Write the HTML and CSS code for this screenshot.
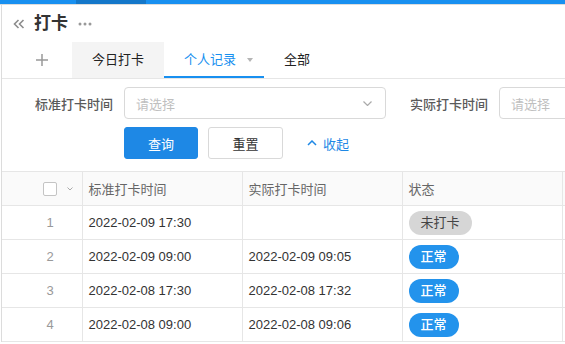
FILE: index.html
```html
<!DOCTYPE html>
<html lang="zh-CN">
<head>
    <meta charset="UTF-8">
    <meta name="viewport" content="width=device-width, initial-scale=1.0">
    <title>打卡</title>
    <link rel="stylesheet" href="styles.css">
</head>
<body>
    <div class="topbar"><span class="topbar-active"></span></div>
    <div class="panel">
        <div class="title-row">
            <svg class="back" width="12" height="10" viewBox="0 0 12 10"><path d="M5.5 1 L1.5 5 L5.5 9 M10.5 1 L6.5 5 L10.5 9" fill="none" stroke="#8c8c8c" stroke-width="1.6"/></svg>
            <span class="title">打卡</span>
            <svg class="more" width="14" height="4" viewBox="0 0 14 4"><circle cx="2" cy="2" r="1.5" fill="#999"/><circle cx="7" cy="2" r="1.5" fill="#999"/><circle cx="12" cy="2" r="1.5" fill="#999"/></svg>
        </div>

        <div class="tabs">
            <div class="tab-add">
                <svg width="12" height="12" viewBox="0 0 12 12"><path d="M6 0 V12 M0 6 H12" stroke="#999" stroke-width="1.5"/></svg>
            </div>
            <div class="tab tab-gray">今日打卡</div>
            <div class="tab tab-active">个人记录<span class="caret"></span></div>
            <div class="tab">全部</div>
        </div>

        <div class="filter">
            <div class="filter-row">
                <label class="filter-label">标准打卡时间</label>
                <div class="select">
                    <span class="placeholder">请选择</span>
                    <svg width="9" height="5" viewBox="0 0 9 5"><path d="M0.5 0.5 L4.5 4.5 L8.5 0.5" fill="none" stroke="#aaa" stroke-width="1.2"/></svg>
                </div>
                <label class="filter-label">实际打卡时间</label>
                <div class="select">
                    <span class="placeholder">请选择</span>
                </div>
            </div>
            <div class="button-row">
                <button class="btn btn-primary">查询</button>
                <button class="btn">重置</button>
                <a class="collapse" href="#">
                    <svg width="10" height="6" viewBox="0 0 10 6"><path d="M1 5 L5 1 L9 5" fill="none" stroke="#1e88e5" stroke-width="1.5"/></svg>
                    收起
                </a>
            </div>
        </div>

        <table class="records">
            <colgroup>
                <col style="width: 80px">
                <col style="width: 160px">
                <col style="width: 160px">
                <col style="width: 160px">
                <col style="width: 100px">
            </colgroup>
            <thead>
                <tr>
                    <th class="cell-index">
                        <span class="checkbox"></span>
                        <svg class="check-caret" width="6" height="4" viewBox="0 0 6 4"><path d="M0.5 0.5 L3 3 L5.5 0.5" fill="none" stroke="#aaa" stroke-width="1"/></svg>
                    </th>
                    <th>标准打卡时间</th>
                    <th>实际打卡时间</th>
                    <th>状态</th>
                    <th></th>
                </tr>
            </thead>
            <tbody id="record-body"></tbody>
        </table>
    </div>

    <script>
        const records = [
            { plan: "2022-02-09 17:30", actual: "", status: "未打卡" },
            { plan: "2022-02-09 09:00", actual: "2022-02-09 09:05", status: "正常" },
            { plan: "2022-02-08 17:30", actual: "2022-02-08 17:32", status: "正常" },
            { plan: "2022-02-08 09:00", actual: "2022-02-08 09:06", status: "正常" }
        ];

        const body = document.getElementById('record-body');
        records.forEach((rec, index) => {
            const badgeClass = rec.status === '正常' ? 'badge badge-ok' : 'badge badge-missing';
            body.innerHTML += `
                <tr>
                    <td class="cell-index"><span class="row-num">${index + 1}</span></td>
                    <td>${rec.plan}</td>
                    <td>${rec.actual}</td>
                    <td><span class="${badgeClass}">${rec.status}</span></td>
                    <td></td>
                </tr>
            `;
        });
    </script>
</body>
</html>
```

FILE: styles.css
```css
body {
    margin: 0;
    padding: 0;
    font-family: "Liberation Sans", "Noto Sans CJK SC", sans-serif;
    font-size: 13px;
    color: #333;
    overflow: hidden;
    background: #fff;
}
.topbar {
    height: 4px;
    background-color: #1890f0;
    border-bottom: 1px solid #dcdcdc;
}
.topbar-active {
    display: block;
    margin-left: 76px;
    width: 70px;
    height: 4px;
    background-color: #1477c9;
}
.panel {
    margin-left: 1px;
    border-left: 1px solid #dcdcdc;
    width: 800px;
}
.title-row {
    display: flex;
    align-items: center;
    height: 37px;
    padding-left: 11px;
}
.title {
    margin-left: 9px;
    font-size: 17px;
    font-weight: bold;
    color: #333;
    line-height: 20px;
}
.more {
    margin-left: 10px;
}
.tabs {
    display: flex;
    height: 36px;
    border-bottom: 1px solid #e6e6e6;
}
.tab-add {
    display: flex;
    align-items: center;
    justify-content: center;
    width: 36px;
    margin-left: 22px;
    margin-right: 12px;
}
.tab {
    display: flex;
    align-items: center;
    padding: 0 20px;
    color: #222;
    line-height: 16px;
}
.tab-gray {
    background-color: #f4f4f4;
}
.tab-active {
    color: #1890f0;
    padding-right: 11px;
    box-shadow: inset 0 -2px 0 #1890f0;
}
.caret {
    margin-left: 11px;
    width: 0;
    height: 0;
    border-left: 3.5px solid transparent;
    border-right: 3.5px solid transparent;
    border-top: 4px solid #b5b5b5;
}
.filter {
    padding: 8px 0 12px 9px;
}
.filter-row {
    display: flex;
    align-items: center;
}
.filter-label {
    flex-shrink: 0;
    width: 102px;
    margin-right: 11px;
    text-align: right;
    color: #5a5a5a;
    font-weight: 500;
}
.select {
    flex-shrink: 0;
    display: flex;
    align-items: center;
    justify-content: space-between;
    box-sizing: border-box;
    width: 262px;
    height: 32px;
    padding: 0 13px 0 11px;
    border: 1px solid #d9d9d9;
    border-radius: 4px;
}
.placeholder {
    color: #bfbfbf;
}
.button-row {
    display: flex;
    align-items: center;
    margin-top: 8px;
    margin-left: 113px;
}
.btn {
    box-sizing: border-box;
    width: 75px;
    height: 32px;
    margin-right: 10px;
    border: 1px solid #d9d9d9;
    border-radius: 3px;
    background: #fff;
    color: #333;
    font-family: inherit;
    font-size: 13px;
}
.btn-primary {
    width: 74px;
    border-color: #1e88e5;
    background-color: #1e88e5;
    color: #fff;
}
.collapse {
    display: flex;
    align-items: center;
    margin-left: 14px;
    color: #1e88e5;
    text-decoration: none;
}
.collapse svg {
    margin-right: 6px;
}
.records {
    border-collapse: collapse;
    table-layout: fixed;
    width: 660px;
}
.records th, .records td {
    height: 33px;
    padding: 0 0 0 6px;
    border: 1px solid #e6e6e6;
    text-align: left;
    font-weight: normal;
    white-space: nowrap;
}
.records th:first-child, .records td:first-child {
    border-left: none;
}
.records th {
    background-color: #fafafa;
    color: #666;
}
.records td {
    color: #333;
}
.records .cell-index {
    padding-left: 41px;
}
.checkbox {
    display: inline-block;
    box-sizing: border-box;
    width: 14px;
    height: 14px;
    border: 1px solid #c4c4c4;
    border-radius: 2px;
    background: #fff;
    vertical-align: middle;
}
.check-caret {
    margin-left: 6px;
    vertical-align: middle;
}
.row-num {
    display: inline-block;
    width: 14px;
    text-align: center;
    color: #999;
}
.badge {
    display: inline-block;
    height: 24px;
    line-height: 24px;
    padding: 0 12px;
    border-radius: 12px;
}
.badge-missing {
    background-color: #d6d6d6;
    color: #444;
}
.badge-ok {
    background-color: #2393ec;
    color: #fff;
    font-weight: 500;
}
```
